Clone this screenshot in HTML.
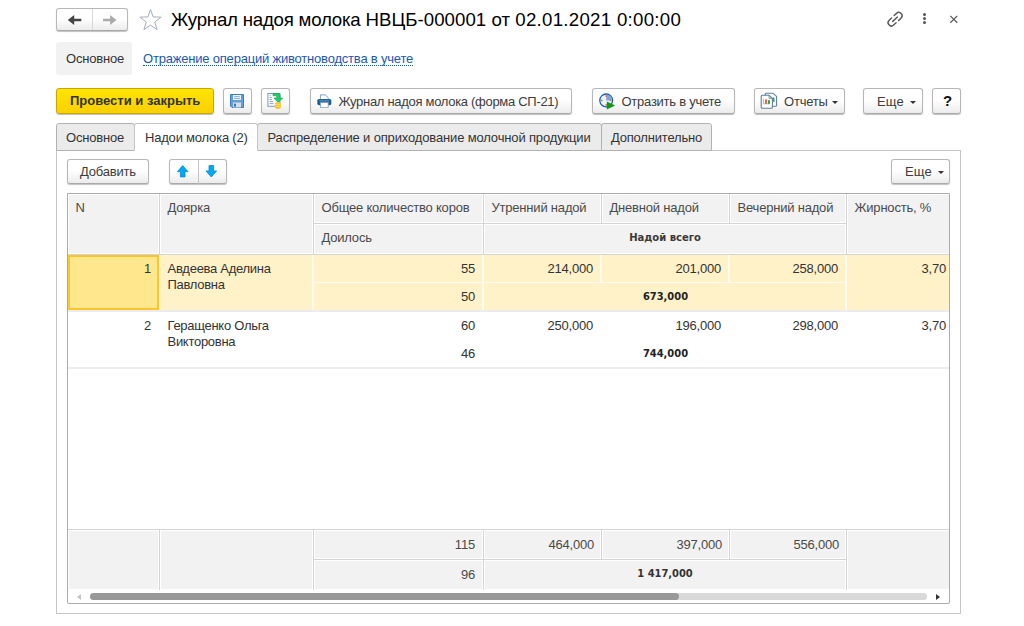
<!DOCTYPE html>
<html lang="ru">
<head>
<meta charset="utf-8">
<title>Журнал надоя молока</title>
<style>
html,body{margin:0;padding:0;}
body{width:1024px;height:626px;background:#fff;position:relative;overflow:hidden;
 font-family:"Liberation Sans",Arial,sans-serif;font-size:13px;color:#333;letter-spacing:-0.2px;}
.abs{position:absolute;box-sizing:border-box;}
.btn{position:absolute;box-sizing:border-box;height:25px;border:1px solid #b7b7b7;border-bottom-color:#a9a9a9;border-radius:3px;
 background:linear-gradient(#ffffff 0%,#ffffff 45%,#ececec 100%);box-shadow:0 1px 1px rgba(0,0,0,.25);
 font-size:13px;line-height:23px;color:#3c3c3c;white-space:nowrap;}
.btn .t{position:absolute;top:0;}
.caret{position:absolute;width:0;height:0;border-left:3px solid transparent;border-right:3px solid transparent;border-top:3px solid #333;}
.tab{position:absolute;box-sizing:border-box;top:123px;height:28px;background:#ebebeb;border:1px solid #b2b2b2;
 border-radius:3px 3px 0 0;font-size:13px;line-height:27px;color:#333;white-space:nowrap;}
.tab span{position:absolute;top:0;}
.hc,.c{position:absolute;box-sizing:border-box;white-space:nowrap;font-size:13px;}
.hc{background:#f2f2f2;color:#4a4a4a;border:1px solid #fff;overflow:hidden;}
.hc span{position:absolute;line-height:16px;}
.c{line-height:16px;color:#333;}
.r{text-align:right;}
.b{font-weight:bold;letter-spacing:0;}
</style>
</head>
<body>

<!-- nav buttons -->
<div class="btn" style="left:56px;top:8px;width:72px;height:23px;"></div>
<div class="abs" style="left:92px;top:9px;width:1px;height:21px;background:#d8d8d8;"></div>
<svg class="abs" style="left:66px;top:13px;" width="18" height="14" viewBox="0 0 18 14"><path d="M1.8 7 L8.2 1.9 L8.2 5.8 L15.3 5.8 L15.3 8.2 L8.2 8.2 L8.2 12.1 Z" fill="#444"/></svg>
<svg class="abs" style="left:101px;top:13px;" width="18" height="14" viewBox="0 0 18 14"><path d="M15.5 7 L9.1 1.9 L9.1 5.8 L2 5.8 L2 8.2 L9.1 8.2 L9.1 12.1 Z" fill="#ababab"/></svg>

<!-- star -->
<svg class="abs" style="left:139px;top:9px;" width="23" height="22" viewBox="0 0 23 22"><path d="M11.50 0.40 L14.15 7.96 L22.15 8.14 L15.78 12.99 L18.08 20.66 L11.50 16.10 L4.92 20.66 L7.22 12.99 L0.85 8.14 L8.85 7.96 Z" fill="#fff" stroke="#a3adb8" stroke-width="1"/></svg>

<div class="abs" id="title" style="left:171px;top:8px;letter-spacing:0;font-size:18.67px;line-height:24px;color:#000;white-space:nowrap;"><span style="letter-spacing:-0.22px">Журнал надоя молока </span><span style="letter-spacing:0.03px">НВЦБ-000001 от </span><span style="letter-spacing:0.28px">02.01.2021 0:00:00</span></div>

<!-- top right icons -->
<svg class="abs" style="left:885px;top:9px;" width="20" height="20" viewBox="0 0 20 20"><g transform="translate(10.1 10.2) rotate(-43)" fill="none" stroke="#5a5a5a" stroke-width="1.45" stroke-linecap="round"><path d="M-1.8 -3.3 H-5 A3.3 3.3 0 0 0 -5 3.3 H-1.8"/><path d="M1.8 -3.3 H5 A3.3 3.3 0 0 1 5 3.3 H1.8"/><path d="M-3.2 0 H3.2"/></g></svg>
<div class="abs" style="left:923px;top:13px;width:3px;height:3px;background:#555;border-radius:1.5px;"></div>
<div class="abs" style="left:923px;top:17px;width:3px;height:3px;background:#555;border-radius:1.5px;"></div>
<div class="abs" style="left:923px;top:21px;width:3px;height:3px;background:#555;border-radius:1.5px;"></div>
<svg class="abs" style="left:949px;top:14px;" width="10" height="10" viewBox="0 0 10 10"><path d="M1.3 1.9 L8.3 8.7 M8.3 1.9 L1.3 8.7" stroke="#555" stroke-width="1.2" fill="none"/></svg>

<!-- nav line -->
<div class="abs" style="left:56px;top:42px;width:76px;height:33px;background:#f2f2f2;border-radius:3px;"></div>
<div class="abs" style="left:66px;top:50px;line-height:18px;color:#333;">Основное</div>
<div class="abs" id="lnk" style="left:143px;top:50px;line-height:18px;color:#1a57b5;border-bottom:1px dotted #1a57b5;height:15px;line-height:16px;top:51px;white-space:nowrap;">Отражение операций животноводства в учете</div>

<!-- command bar -->
<div class="btn b" style="left:56px;top:88px;width:158px;height:26px;line-height:24px;border-color:#c9a500;background:linear-gradient(#ffe400,#fbd000);color:#333;"><span class="t" style="left:13px;">Провести и закрыть</span></div>
<div class="btn" style="left:223px;top:88px;width:29px;height:26px;line-height:26px;"></div>
<svg class="abs" style="left:230px;top:94px;" width="14" height="14" viewBox="0 0 14 14"><path d="M0.5 0.5 H13.5 V13.5 H2 L0.5 12 Z" fill="#62a0dc" stroke="#3b7cc4" stroke-width="1"/><rect x="3" y="1" width="8" height="5" fill="#eef4fb"/><rect x="4.2" y="2.2" width="5.6" height="0.9" fill="#7ea6d0"/><rect x="4.2" y="4" width="5.6" height="0.9" fill="#7ea6d0"/><rect x="3" y="8.5" width="8" height="5" fill="#d9dde2"/><rect x="4.2" y="9.7" width="1.6" height="3" fill="#1f5fa8"/></svg>
<div class="btn" style="left:261px;top:88px;width:29px;height:26px;line-height:26px;"></div>
<svg class="abs" style="left:266px;top:92px;" width="18" height="18" viewBox="0 0 18 18"><rect x="1.9" y="1.5" width="12" height="12.8" fill="#fdfdfd" stroke="#7f9abb" stroke-width="1"/><path d="M3.6 3.6 H4.6 M3.6 5.6 H5.8 M3.6 7.6 H5.8 M3.6 9.6 H7 M3.6 11.6 H7.4" stroke="#7f9abb" stroke-width="0.9"/><path d="M7 1.4 H12.2 Q14.1 1.4 14.1 3.3 V6 H16.7 L12.3 10.5 L7.9 6 H10.7 V3.7 H7 Z" fill="#1fd06a" stroke="#0a9a44" stroke-width="0.55" stroke-linejoin="round"/><rect x="8.9" y="10.2" width="6.2" height="6.6" rx="1.8" fill="#f3c31c"/><path d="M9.2 12.3 H14.8 M9.2 14.4 H14.8" stroke="#fbe78c" stroke-width="0.8"/></svg>
<div class="btn" style="left:310px;top:88px;width:262px;height:26px;line-height:26px;"><svg class="abs" style="left:6px;top:5px;" width="14.6" height="13.8" viewBox="0 0 15 15.5" preserveAspectRatio="none"><path d="M3.5 5.5 V1 H8.5 L11.5 4 V5.5" fill="#fff" stroke="#7a9ab8" stroke-width="1"/><rect x="0.3" y="5.6" width="14.4" height="7" rx="1.8" fill="#17608f"/><rect x="2.4" y="7.2" width="10.2" height="1" fill="#6fa3c8"/><rect x="3.5" y="9.5" width="8" height="5.5" fill="#fff" stroke="#7a9ab8" stroke-width="0.8"/></svg><span class="t" style="left:27.5px;letter-spacing:-0.3px;">Журнал надоя молока (форма СП-21)</span></div>
<div class="btn" style="left:592px;top:88px;width:143px;height:26px;line-height:26px;"><svg class="abs" style="left:4.5px;top:2.6px;" width="18" height="18" viewBox="0 0 18 18"><circle cx="8.2" cy="8.4" r="6.4" fill="#edf4fc" stroke="#1560b0" stroke-width="1.3"/><path d="M8.2 2.6 A5.8 5.8 0 0 1 14 8.4 L8.2 8.4 Z" fill="#7da7dc"/><circle cx="8.2" cy="4" r="0.9" fill="#ff6a3c"/><circle cx="3.8" cy="8.4" r="0.9" fill="#ff6a3c"/><circle cx="12.4" cy="8.4" r="0.9" fill="#ff6a3c"/><circle cx="8.2" cy="12.8" r="0.9" fill="#ff6a3c"/><path d="M8.8 9.6 L17.2 13.4 L8.8 17.4 Z" fill="#0d9a12"/></svg><span class="t" style="left:28.5px;letter-spacing:-0.25px;">Отразить в учете</span></div>
<div class="btn" style="left:754px;top:88px;width:91px;height:26px;line-height:26px;"><svg class="abs" style="left:5px;top:2.3px;" width="18" height="18" viewBox="0 0 18 18"><path d="M6.2 2.2 H13 L16.6 5.4 V14.2 Q16.6 15.2 15.6 15.2 H6.2 Q5.2 15.2 5.2 14.2 V3.2 Q5.2 2.2 6.2 2.2 Z" fill="#fff" stroke="#607f99" stroke-width="1.1"/><rect x="12.6" y="6.6" width="1.9" height="4.2" fill="#18b04a"/><path d="M2.2 4.3 H9 L12.4 7.5 V16.3 Q12.4 17.3 11.4 17.3 H2.2 Q1.2 17.3 1.2 16.3 V5.3 Q1.2 4.3 2.2 4.3 Z" fill="#fff" stroke="#607f99" stroke-width="1.1"/><path d="M9 4.3 V7.5 H12.4" fill="none" stroke="#6e8ba3" stroke-width="0.8"/><path d="M3.4 7.6 V12.8 H10" fill="none" stroke="#a0a8b0" stroke-width="0.8"/><rect x="5" y="8.4" width="2" height="4.4" fill="#ff5a42"/><rect x="8" y="9.2" width="2" height="3.6" fill="#18b04a"/></svg><span class="t" style="left:29px;">Отчеты</span><i class="caret" style="left:77px;top:12px;"></i></div>
<div class="btn" style="left:863px;top:88px;width:60px;height:26px;line-height:26px;"><span class="t" style="left:13px;letter-spacing:0.2px;">Еще</span><i class="caret" style="left:46px;top:12px;"></i></div>
<div class="btn b" style="left:932px;top:88px;width:29px;height:26px;line-height:24px;font-size:15px;color:#111;"><span class="t" style="left:10px;">?</span></div>

<!-- panel -->
<div class="abs" style="left:56px;top:150px;width:905px;height:464px;border:1px solid #c6c6c6;background:#fff;"></div>

<!-- tabs -->
<div class="tab" style="left:56px;width:79px;"><span style="left:9px;">Основное</span></div>
<div class="tab" style="left:257px;width:345px;"><span style="left:9.5px;letter-spacing:-0.15px;">Распределение и оприходование молочной продукции</span></div>
<div class="tab" style="left:601px;width:111px;"><span style="left:9px;">Дополнительно</span></div>
<div class="tab" style="left:134px;top:123px;width:124px;height:28px;background:#fff;line-height:27px;border-color:#c6c6c6;border-bottom-color:#fff;"><span style="left:10px;">Надои молока (2)</span></div>

<!-- table toolbar -->
<div class="btn" style="left:67px;top:159px;width:82px;"><span class="t" style="left:12px;">Добавить</span></div>
<div class="btn" style="left:169px;top:159px;width:58px;"></div>
<div class="abs" style="left:198px;top:160px;width:1px;height:24px;background:#c4c4c4;"></div>
<svg class="abs" style="left:176px;top:164px;" width="14" height="14" viewBox="0 0 14 14"><path d="M6.7 1.6 L12 7.6 H9 V12.9 H4.4 V7.6 H1.4 Z" fill="#00aaf2" stroke="#0a87cf" stroke-width="0.8" stroke-linejoin="round"/></svg>
<svg class="abs" style="left:204px;top:164px;" width="14" height="14" viewBox="0 0 14 14"><path d="M7.3 13 L12.6 7 H9.6 V1.5 H5 V7 H2 Z" fill="#00aaf2" stroke="#0a87cf" stroke-width="0.8" stroke-linejoin="round"/></svg>
<div class="btn" style="left:891px;top:159px;width:59px;"><span class="t" style="left:13px;letter-spacing:0.2px;">Еще</span><i class="caret" style="left:46px;top:11px;"></i></div>

<!-- table -->
<div class="abs" id="tbl" style="left:67px;top:193px;width:883px;height:411px;border-radius:0 0 2px 2px;border:1px solid #ababab;background:#fff;"></div>
<!-- header -->
<div class="abs" style="left:68px;top:194px;width:881px;height:61px;background:#d4d4d4;"></div>
<div class="hc" style="left:68px;top:194px;width:91px;height:60px;"><span style="left:6.5px;top:5px;">N</span></div>
<div class="hc" style="left:160px;top:194px;width:153px;height:60px;"><span style="left:6.5px;top:5px;">Доярка</span></div>
<div class="hc" style="left:314px;top:194px;width:169px;height:29px;"><span style="left:6.5px;top:5px;">Общее количество коров</span></div>
<div class="hc" style="left:314px;top:224px;width:169px;height:30px;"><span style="left:6.5px;top:5px;">Доилось</span></div>
<div class="hc" style="left:484px;top:194px;width:117px;height:29px;"><span style="left:6.5px;top:5px;">Утренний надой</span></div>
<div class="hc" style="left:602px;top:194px;width:127px;height:29px;"><span style="left:6.5px;top:5px;">Дневной надой</span></div>
<div class="hc" style="left:730px;top:194px;width:116px;height:29px;"><span style="left:6.5px;top:5px;">Вечерний надой</span></div>
<div class="hc" style="left:484px;top:224px;width:362px;height:30px;"><span style="left:0px;top:5px;right:0;text-align:center;font-family:'DejaVu Sans',sans-serif;font-weight:bold;font-size:10px;letter-spacing:0;color:#3a3a3a;">Надой всего</span></div>
<div class="hc" style="left:847px;top:194px;width:102px;height:60px;border-right:none;"><span style="left:6.5px;top:5px;">Жирность, %</span></div>
<!-- rows -->
<div class="abs" style="left:68px;top:255px;width:881px;height:55px;background:#fff2c9;"></div>
<div class="abs" style="left:312px;top:255px;width:2px;height:55px;background:#fffbee;"></div>
<div class="abs" style="left:482px;top:255px;width:2px;height:55px;background:#fffbee;"></div>
<div class="abs" style="left:845px;top:255px;width:2px;height:55px;background:#fffbee;"></div>
<div class="abs" style="left:600px;top:255px;width:2px;height:27px;background:#fffbee;"></div>
<div class="abs" style="left:728px;top:255px;width:2px;height:27px;background:#fffbee;"></div>
<div class="abs" style="left:313px;top:282px;width:534px;height:1px;background:#fffbee;"></div>
<div class="abs" style="left:68px;top:255px;width:91px;height:55px;background:#ffe78e;border:2px solid #fcc62a;"></div>
<div class="abs" style="left:68px;top:310px;width:881px;height:2px;background:#ececf0;"></div>
<div class="c" style="left:68px;top:261px;width:83px;text-align:right;">1</div>
<div class="c" style="left:167.5px;top:261px;width:140px;letter-spacing:-0.28px;">Авдеева Аделина<br>Павловна</div>
<div class="c" style="left:314px;top:261px;width:161px;text-align:right;">55</div>
<div class="c" style="left:314px;top:289px;width:161px;text-align:right;">50</div>
<div class="c" style="left:484px;top:261px;width:109px;text-align:right;">214,000</div>
<div class="c" style="left:602px;top:261px;width:119px;text-align:right;">201,000</div>
<div class="c" style="left:730px;top:261px;width:108px;text-align:right;">258,000</div>
<div class="c" style="left:484px;top:289px;width:363px;text-align:center;font-family:'DejaVu Sans Condensed','DejaVu Sans',sans-serif;font-weight:bold;font-size:11px;letter-spacing:0;color:#222;">673,000</div>
<div class="c" style="left:847px;top:261px;width:99px;text-align:right;">3,70</div>
<div class="abs" style="left:68px;top:367px;width:881px;height:2px;background:#ececf0;"></div>
<div class="c" style="left:68px;top:318px;width:83px;text-align:right;">2</div>
<div class="c" style="left:167.5px;top:318px;width:140px;letter-spacing:-0.28px;">Геращенко Ольга<br>Викторовна</div>
<div class="c" style="left:314px;top:318px;width:161px;text-align:right;">60</div>
<div class="c" style="left:314px;top:346px;width:161px;text-align:right;">46</div>
<div class="c" style="left:484px;top:318px;width:109px;text-align:right;">250,000</div>
<div class="c" style="left:602px;top:318px;width:119px;text-align:right;">196,000</div>
<div class="c" style="left:730px;top:318px;width:108px;text-align:right;">298,000</div>
<div class="c" style="left:484px;top:346px;width:363px;text-align:center;font-family:'DejaVu Sans Condensed','DejaVu Sans',sans-serif;font-weight:bold;font-size:11px;letter-spacing:0;color:#222;">744,000</div>
<div class="c" style="left:847px;top:318px;width:99px;text-align:right;">3,70</div>
<!-- footer -->
<div class="abs" style="left:68px;top:529px;width:881px;height:61px;background:#d4d4d4;"></div>
<div class="hc fc" style="left:68px;top:530px;width:91px;height:60px;"></div>
<div class="hc fc" style="left:160px;top:530px;width:153px;height:60px;"></div>
<div class="hc fc" style="left:314px;top:530px;width:169px;height:29px;"><span style="left:0px;top:5.5px;right:7px;text-align:right;">115</span></div>
<div class="hc fc" style="left:314px;top:560px;width:169px;height:30px;"><span style="left:0px;top:5.5px;right:7px;text-align:right;">96</span></div>
<div class="hc fc" style="left:484px;top:530px;width:117px;height:29px;"><span style="left:0px;top:5.5px;right:6px;text-align:right;">464,000</span></div>
<div class="hc fc" style="left:602px;top:530px;width:127px;height:29px;"><span style="left:0px;top:5.5px;right:6px;text-align:right;">397,000</span></div>
<div class="hc fc" style="left:730px;top:530px;width:116px;height:29px;"><span style="left:0px;top:5.5px;right:6px;text-align:right;">556,000</span></div>
<div class="hc fc" style="left:484px;top:560px;width:362px;height:30px;"><span style="left:0px;top:4.5px;right:0;text-align:center;font-family:'DejaVu Sans Condensed','DejaVu Sans',sans-serif;font-weight:bold;font-size:11px;letter-spacing:0;color:#333;">1 417,000</span></div>
<div class="hc fc" style="left:847px;top:530px;width:102px;height:60px;border-right:none;"></div>
<!-- scrollbar -->
<div class="abs" style="left:90px;top:593px;width:837px;height:7px;background:#d9d9d9;border-radius:3.5px;"></div>
<div class="abs" style="left:90px;top:593px;width:589px;height:7px;background:#999;border-radius:3.5px;"></div>
<div class="abs" style="left:77px;top:593.5px;width:0;height:0;border-top:3px solid transparent;border-bottom:3px solid transparent;border-right:4px solid #c4c4c4;"></div>
<div class="abs" style="left:936px;top:593.5px;width:0;height:0;border-top:3px solid transparent;border-bottom:3px solid transparent;border-left:4px solid #333;"></div>


</body>
</html>
